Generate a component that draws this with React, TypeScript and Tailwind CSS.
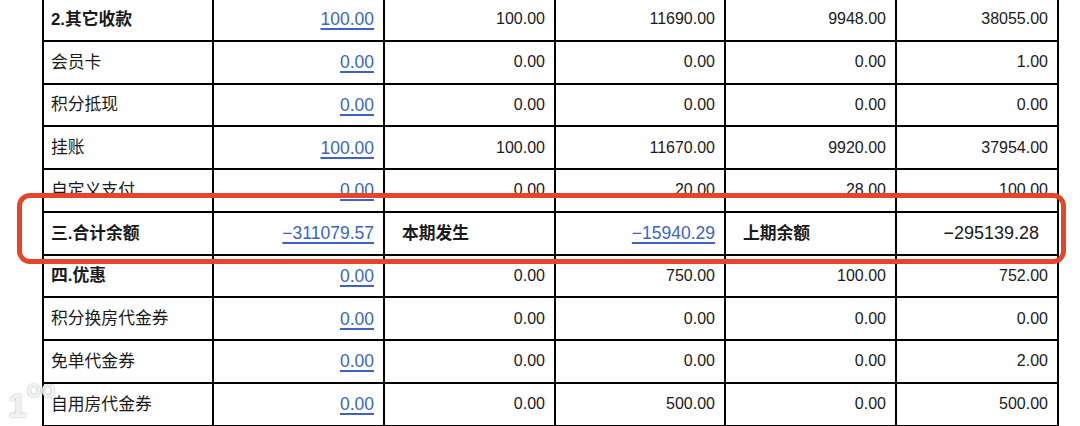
type Cell = { text: string; link?: boolean; bold?: boolean; left?: boolean; pr?: boolean };

const font = { fontFamily: '"Liberation Sans", "Noto Sans CJK SC", sans-serif' };

const rows: string[][] = [
  ["2.其它收款", "100.00", "100.00", "11690.00", "9948.00", "38055.00"],
  ["会员卡", "0.00", "0.00", "0.00", "0.00", "1.00"],
  ["积分抵现", "0.00", "0.00", "0.00", "0.00", "0.00"],
  ["挂账", "100.00", "100.00", "11670.00", "9920.00", "37954.00"],
  ["自定义支付", "0.00", "0.00", "20.00", "28.00", "100.00"],
  ["三.合计余额", "−311079.57", "本期发生", "−15940.29", "上期余额", "−295139.28"],
  ["四.优惠", "0.00", "0.00", "750.00", "100.00", "752.00"],
  ["积分换房代金券", "0.00", "0.00", "0.00", "0.00", "0.00"],
  ["免单代金券", "0.00", "0.00", "0.00", "0.00", "2.00"],
  ["自用房代金券", "0.00", "0.00", "500.00", "0.00", "500.00"],
];

const boldRows = [0, 6];

function toCells(row: string[], i: number): Cell[] {
  if (i === 5) {
    return [
      { text: row[0], bold: true, left: true },
      { text: row[1], link: true },
      { text: row[2], bold: true, left: true },
      { text: row[3], link: true },
      { text: row[4], bold: true, left: true },
      { text: row[5], pr: true },
    ];
  }
  return row.map((t, j) => ({
    text: t,
    left: j === 0,
    bold: j === 0 && boldRows.includes(i),
    link: j === 1,
  }));
}

export default function App() {
  return (
    <div className="relative w-[1080px] h-[426px] overflow-hidden bg-white" style={font}>
      <table className="table-fixed border-collapse ml-[42px] -mt-[3px] w-[1015px] text-[16px] text-[#1a1a1a]">
        <colgroup>
          <col className="w-[170px]" />
          <col className="w-[171px]" />
          <col className="w-[171px]" />
          <col className="w-[170px]" />
          <col className="w-[171px]" />
          <col className="w-[162px]" />
        </colgroup>
        <tbody>
          {rows.map((row, i) => (
            <tr key={i} className="h-[42.75px]">
              {toCells(row, i).map((c, j) => (
                <td
                  key={j}
                  className={[
                    "border-2 border-black p-0 whitespace-nowrap",
                    c.left ? "text-left text-[16.8px]" : "text-right",
                    c.left ? (j === 0 ? "pl-[7px]" : "pl-[17px]") : c.pr ? "pr-[18px] text-[18px]" : "pr-[9px]",
                    c.bold ? "font-bold" : "",
                  ].join(" ")}
                >
                  {c.link ? (
                    <a
                      href="#"
                      className="text-[17.5px] text-[#3a64c8] underline decoration-[1.5px] underline-offset-[3px]"
                    >
                      {c.text}
                    </a>
                  ) : (
                    c.text
                  )}
                </td>
              ))}
            </tr>
          ))}
        </tbody>
      </table>

      {/* red highlight box */}
      <div className="absolute left-[17px] top-[193px] w-[1049px] h-[71px] border-[5px] border-[#e6452c] rounded-[13px] pointer-events-none" />

      {/* faint watermark */}
      <div className="absolute left-[8px] top-[380px] flex items-start text-[34px] font-bold text-white/85 pointer-events-none [text-shadow:0_0_2px_rgba(0,0,0,0.4)]">
        <span>1</span>
        <span className="text-[18px] -mt-[2px]">OO</span>
      </div>
    </div>
  );
}
